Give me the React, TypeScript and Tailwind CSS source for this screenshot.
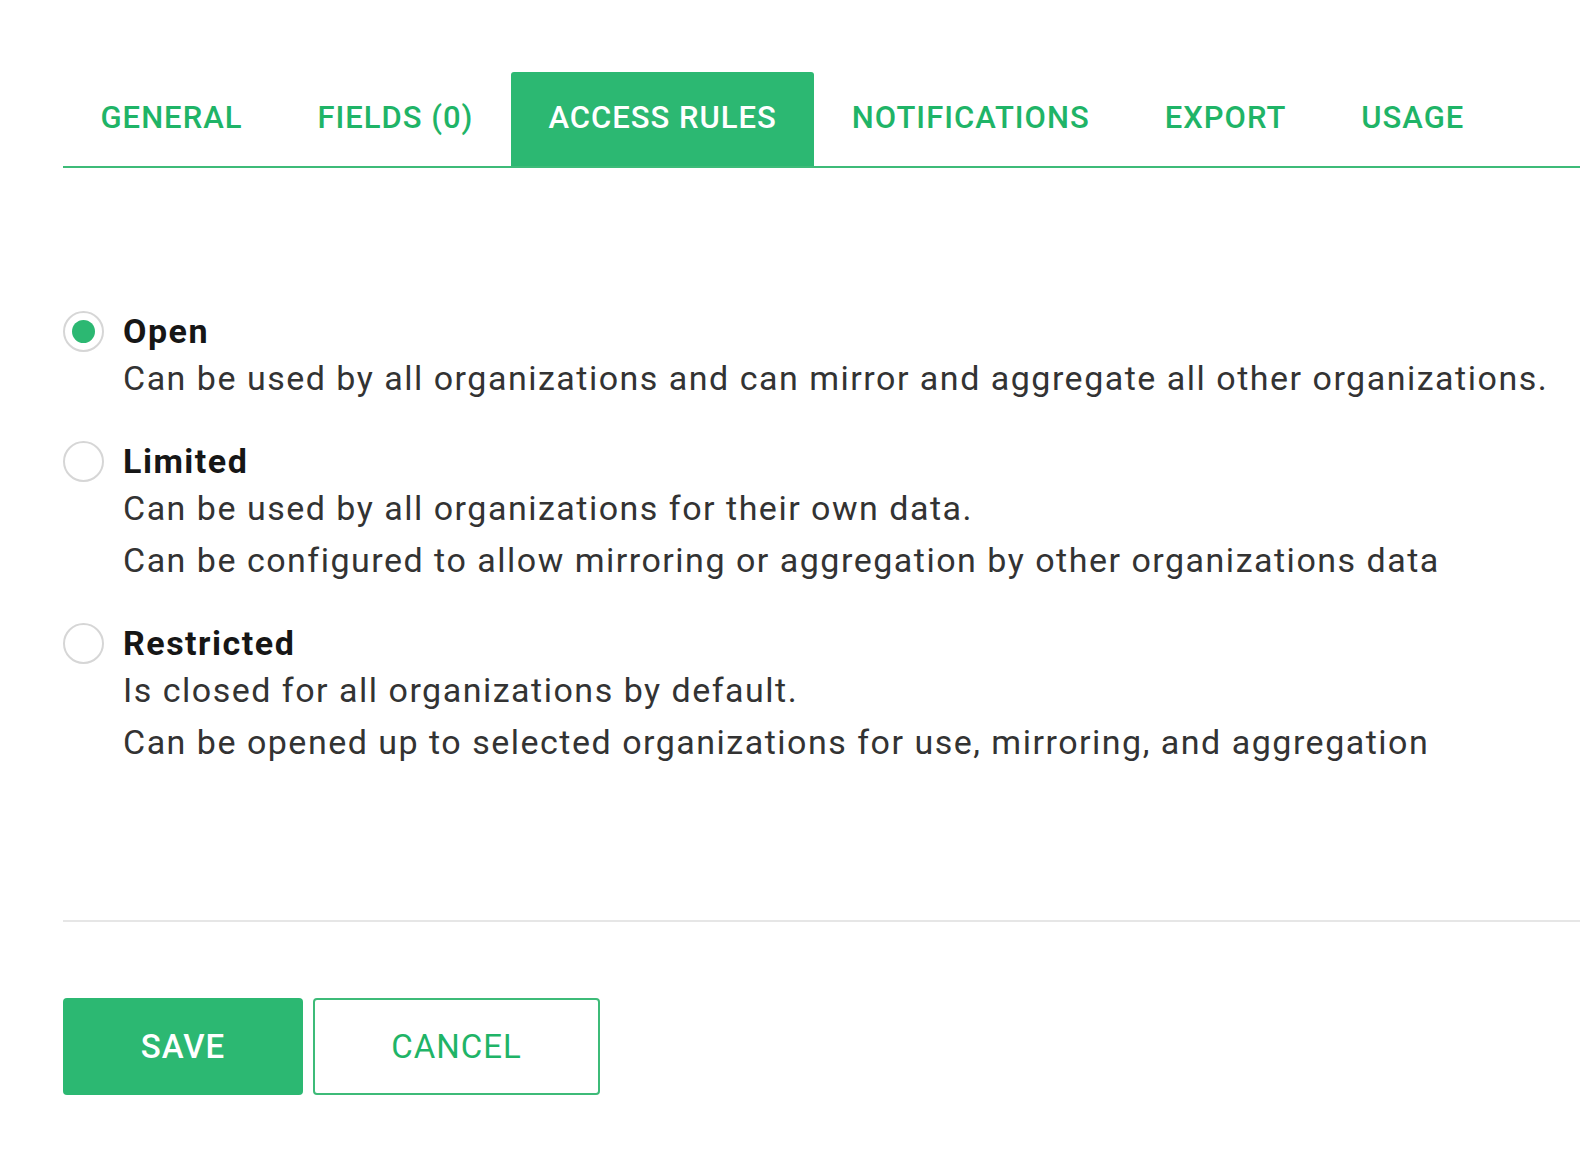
import { useState } from 'react'

const TABS = ['GENERAL', 'FIELDS (0)', 'ACCESS RULES', 'NOTIFICATIONS', 'EXPORT', 'USAGE']

const RULES = [
  {
    id: 'open',
    label: 'Open',
    lines: ['Can be used by all organizations and can mirror and aggregate all other organizations.'],
  },
  {
    id: 'limited',
    label: 'Limited',
    lines: [
      'Can be used by all organizations for their own data.',
      'Can be configured to allow mirroring or aggregation by other organizations data',
    ],
  },
  {
    id: 'restricted',
    label: 'Restricted',
    lines: [
      'Is closed for all organizations by default.',
      'Can be opened up to selected organizations for use, mirroring, and aggregation',
    ],
  },
]

export default function App() {
  const [activeTab, setActiveTab] = useState('ACCESS RULES')
  const [rule, setRule] = useState('open')

  return (
    <div className="min-h-[1165px] w-[1580px] bg-white pl-[63px] pt-[72px] font-['Roboto',sans-serif]">
      {/* Tabs */}
      <div className="flex border-b-2 border-[#3dbb78]">
        {TABS.map((tab) => (
          <button
            key={tab}
            onClick={() => setActiveTab(tab)}
            className={`flex h-[94px] items-center rounded-t-[3px] px-[37.5px] pb-[1px] text-[31px] font-medium tracking-[1px] ${
              activeTab === tab ? 'bg-[#2cb872] text-white' : 'text-[#1fb467]'
            }`}
          >
            {tab}
          </button>
        ))}
      </div>

      {/* Access rules */}
      <div className="mt-[142px] flex flex-col gap-[36px]">
        {RULES.map((r) => (
          <label key={r.id} className="flex cursor-pointer gap-[19px]" onClick={() => setRule(r.id)}>
            <div className="flex h-[42px] items-center">
              <div className="flex h-[41px] w-[41px] items-center justify-center rounded-full border-2 border-[#d6d6d6]">
                {rule === r.id && <div className="h-[23px] w-[23px] rounded-full bg-[#2cb872]" />}
              </div>
            </div>
            <div className="text-[34px] tracking-[1.5px]">
              <div className="font-bold leading-[42px] text-[#161616]">{r.label}</div>
              {r.lines.map((line) => (
                <div key={line} className="leading-[52px] text-[#333333]">
                  {line}
                </div>
              ))}
            </div>
          </label>
        ))}
      </div>

      {/* Divider */}
      <div className="mt-[152px] h-[2px] bg-[#e6e6e6]" />

      {/* Actions */}
      <div className="mt-[76px] flex gap-[10px]">
        <button className="flex h-[97px] w-[240px] items-center justify-center rounded-[4px] bg-[#2cb872] text-[33px] font-medium tracking-[1px] text-white">
          SAVE
        </button>
        <button className="flex h-[97px] w-[287px] items-center justify-center rounded-[4px] border-2 border-[#3dbb78] bg-white text-[33px] tracking-[1px] text-[#1fb467]">
          CANCEL
        </button>
      </div>
    </div>
  )
}
